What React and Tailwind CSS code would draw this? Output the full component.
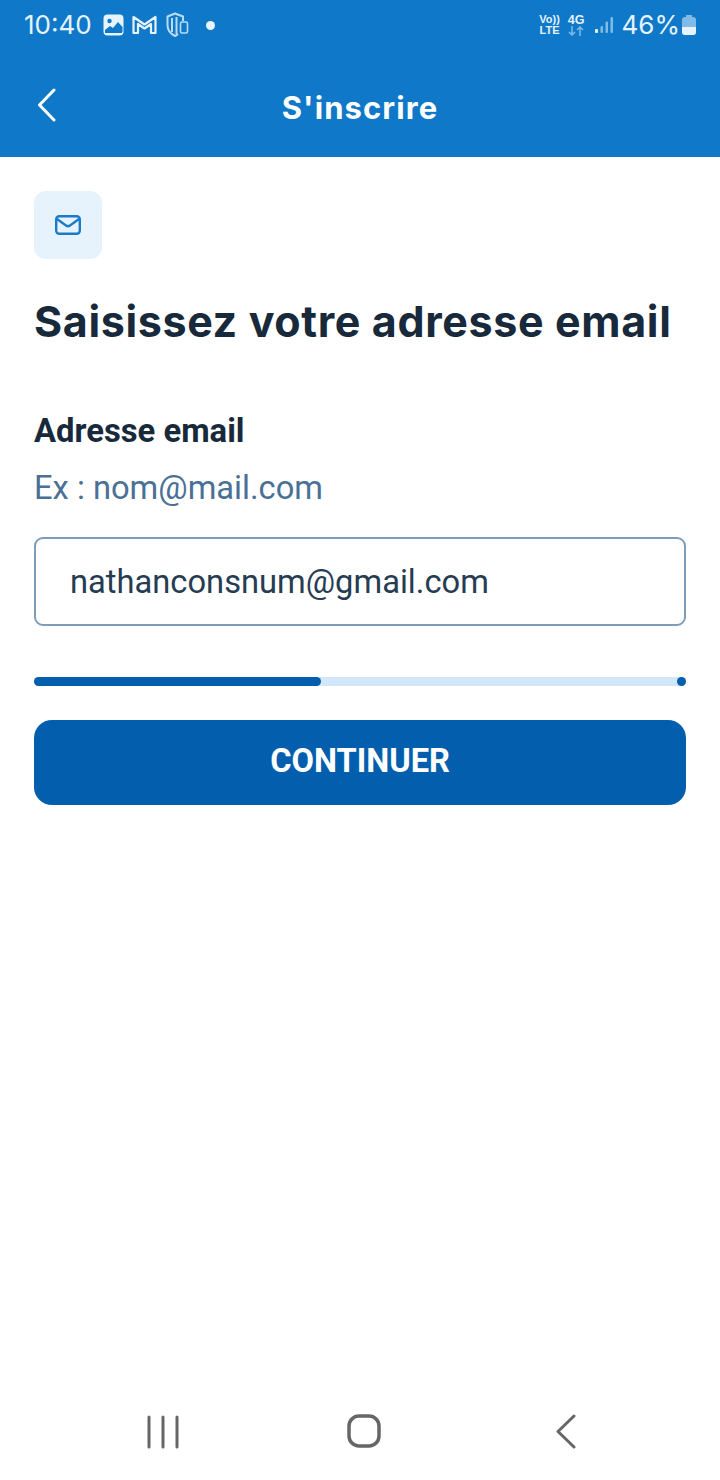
const StatusIcons = () => (
  <div className="flex items-center ml-[11px]">
    <svg width="22" height="22" viewBox="0 0 22 22" fill="none">
      <rect x="0.5" y="0.5" width="20" height="21" rx="4" fill="#e6f3fc" />
      <circle cx="6.500" cy="7" r="2.200" fill="#0f78c8" />
      <path d="M2 18v-2l5-4 3 2 5-6 4.500 5v5z" fill="#0f78c8" />
      <path d="M2 16.500l5-3.500 3 2 5-5 4 4v5H2z" fill="#0f78c8" />
    </svg>
    <svg width="25" height="20" viewBox="0 0 25 20" fill="none" className="ml-[7px]">
      <path d="M1.500 18V2L12.500 9.500 23.500 2V18H19V9L12.500 13.500 6 9V18z" stroke="#e6f3fc" strokeWidth="2.200" strokeLinejoin="round" />
    </svg>
    <svg width="24" height="26" viewBox="0 0 24 26" fill="none" className="ml-[9px]">
      <path d="M17 9V4.500L9 1.500 1.500 4.500v8.500c0 5 3.500 9 7.500 11 1.200-.6 2.200-1.300 3-2" stroke="#b9dcf5" strokeWidth="2" strokeLinejoin="round" />
      <path d="M6 6v14M10.500 5v17" stroke="#b9dcf5" strokeWidth="2" />
      <rect x="14.500" y="10" width="7" height="11" rx="1.500" stroke="#b9dcf5" strokeWidth="1.600" />
    </svg>
    <span className="ml-[16px] h-[9px] w-[9px] rounded-full bg-[#e6f3fc]" />
  </div>
);

const Signal = () => (
  <svg width="20" height="20" viewBox="0 0 20 20" className="ml-[9px]">
    <rect x="1" y="14" width="3" height="4" rx="1" fill="#e6f3fc" />
    <rect x="6.500" y="11" width="2.500" height="7" rx="1" fill="#7fbbe6" />
    <rect x="11.500" y="6.500" width="2.500" height="11.500" rx="1" fill="#7fbbe6" />
    <rect x="16.500" y="2" width="2.500" height="16" rx="1" fill="#7fbbe6" />
  </svg>
);

export default function App() {
  return (
    <div className="flex h-[1480px] w-[720px] flex-col overflow-hidden bg-white font-['Roboto',sans-serif]">
      <header className="h-[157px] shrink-0 bg-[#0f78c8]">
        <div className="flex h-[50px] items-center pl-[24px] pr-[24px] text-[#e6f3fc]">
          <span className="text-[26px] leading-none font-['Inter',sans-serif]">10:40</span>
          <StatusIcons />
          <div className="ml-auto flex items-center">
            <div className="flex flex-col items-center text-[11px] font-bold leading-[11px] font-['Liberation_Sans',sans-serif]">
              <span>Vo))</span>
              <span>LTE</span>
            </div>
            <div className="ml-[8px] flex flex-col items-center text-[#e6f3fc]">
              <span className="text-[12.500px] font-bold leading-[11px] font-['Liberation_Sans',sans-serif]">4G</span>
              <svg width="16" height="10" viewBox="0 0 16 10" fill="none" stroke="#7fbbe6" strokeWidth="1.500">
                <path d="M4 0v9M1 6l3 3 3-3M12 10V1M9 4l3-3 3 3" />
              </svg>
            </div>
            <Signal />
            <span className="ml-[8px] text-[26px] leading-none font-['Inter',sans-serif]">46%</span>
            <div className="relative ml-[2px] mt-[2px] h-[18px] w-[14px] rounded-[3px] bg-[#7fbbe6] before:absolute before:-top-[2px] before:left-[4px] before:h-[2px] before:w-[6px] before:bg-[#7fbbe6]">
              <div className="absolute bottom-0 h-[8px] w-full rounded-b-[3px] bg-[#e6f3fc]" />
            </div>
          </div>
        </div>
        <div className="relative flex h-[107px] items-start justify-center pt-[40px]">
          <svg width="20" height="34" viewBox="0 0 20 34" fill="none" className="absolute left-[37px] top-[38px]">
            <path d="M17 2L2.500 17 17 32" stroke="white" strokeWidth="3" strokeLinecap="round" strokeLinejoin="round" />
          </svg>
          <h1 className="text-[31px] font-bold leading-[36px] tracking-[1.100px] text-white font-['Inter',sans-serif]">S'inscrire</h1>
        </div>
      </header>

      <main className="flex flex-1 flex-col px-[34px] pt-[34px]">
        <div className="flex h-[68px] w-[68px] items-center justify-center rounded-[12px] bg-[#e6f3fc]">
          <svg width="26" height="20" viewBox="0 0 26 20" fill="none">
            <rect x="1.200" y="1.200" width="23.600" height="17.600" rx="3" stroke="#1a7cc8" strokeWidth="2.400" />
            <path d="M2 4l9 6.500c1.300.9 2.700.9 4 0L24 4" stroke="#1a7cc8" strokeWidth="2.400" />
          </svg>
        </div>

        <h2 className="mt-[34px] whitespace-nowrap text-[43px] font-bold leading-[56px] tracking-[0.640px] text-[#17293b] font-['Inter',sans-serif]">
          Saisissez votre adresse email
        </h2>

        <label className="mt-[62px] text-[32.800px] font-bold leading-[40px] text-[#17293b]" htmlFor="email">
          Adresse email
        </label>
        <p className="mt-[17px] text-[32.700px] leading-[40px] text-[#4a7096]">Ex : nom@mail.com</p>

        <input
          id="email"
          readOnly
          value="nathanconsnum@gmail.com"
          className="mt-[29px] h-[89px] w-full rounded-[9px] border-2 border-[#7c9cb9] bg-white px-[34px] text-[32.700px] text-[#263c52] outline-none"
        />

        <div className="relative mt-[51px] flex h-[9px] w-full rounded-full bg-[#d2e8fa]">
          <div className="h-full w-[287px] rounded-full bg-[#045eae]" />
          <div className="absolute right-0 top-0 h-[9px] w-[9px] rounded-full bg-[#045eae]" />
        </div>

        <button className="mt-[34px] h-[85px] w-full rounded-[18px] bg-[#045eae] pb-[2px] text-[32.600px] font-bold text-white">
          CONTINUER
        </button>
      </main>

      <nav className="flex h-[100px] shrink-0 items-start pt-[34px]">
        <div className="flex w-[325px] justify-center">
          <svg width="36" height="36" viewBox="0 0 36 36" fill="none" stroke="#666" strokeWidth="3" strokeLinecap="round">
            <path d="M4 3v30M18 3v30M32 3v30" />
          </svg>
        </div>
        <svg width="34" height="34" viewBox="0 0 34 34" fill="none" className="ml-[22px]">
          <rect x="2" y="2" width="30" height="30" rx="10" stroke="#666" strokeWidth="3.500" />
        </svg>
        <svg width="22" height="36" viewBox="0 0 22 36" fill="none" className="ml-[174px]">
          <path d="M19 2L3 17.500 19 33" stroke="#666" strokeWidth="3" strokeLinecap="round" strokeLinejoin="round" />
        </svg>
      </nav>
    </div>
  );
}
